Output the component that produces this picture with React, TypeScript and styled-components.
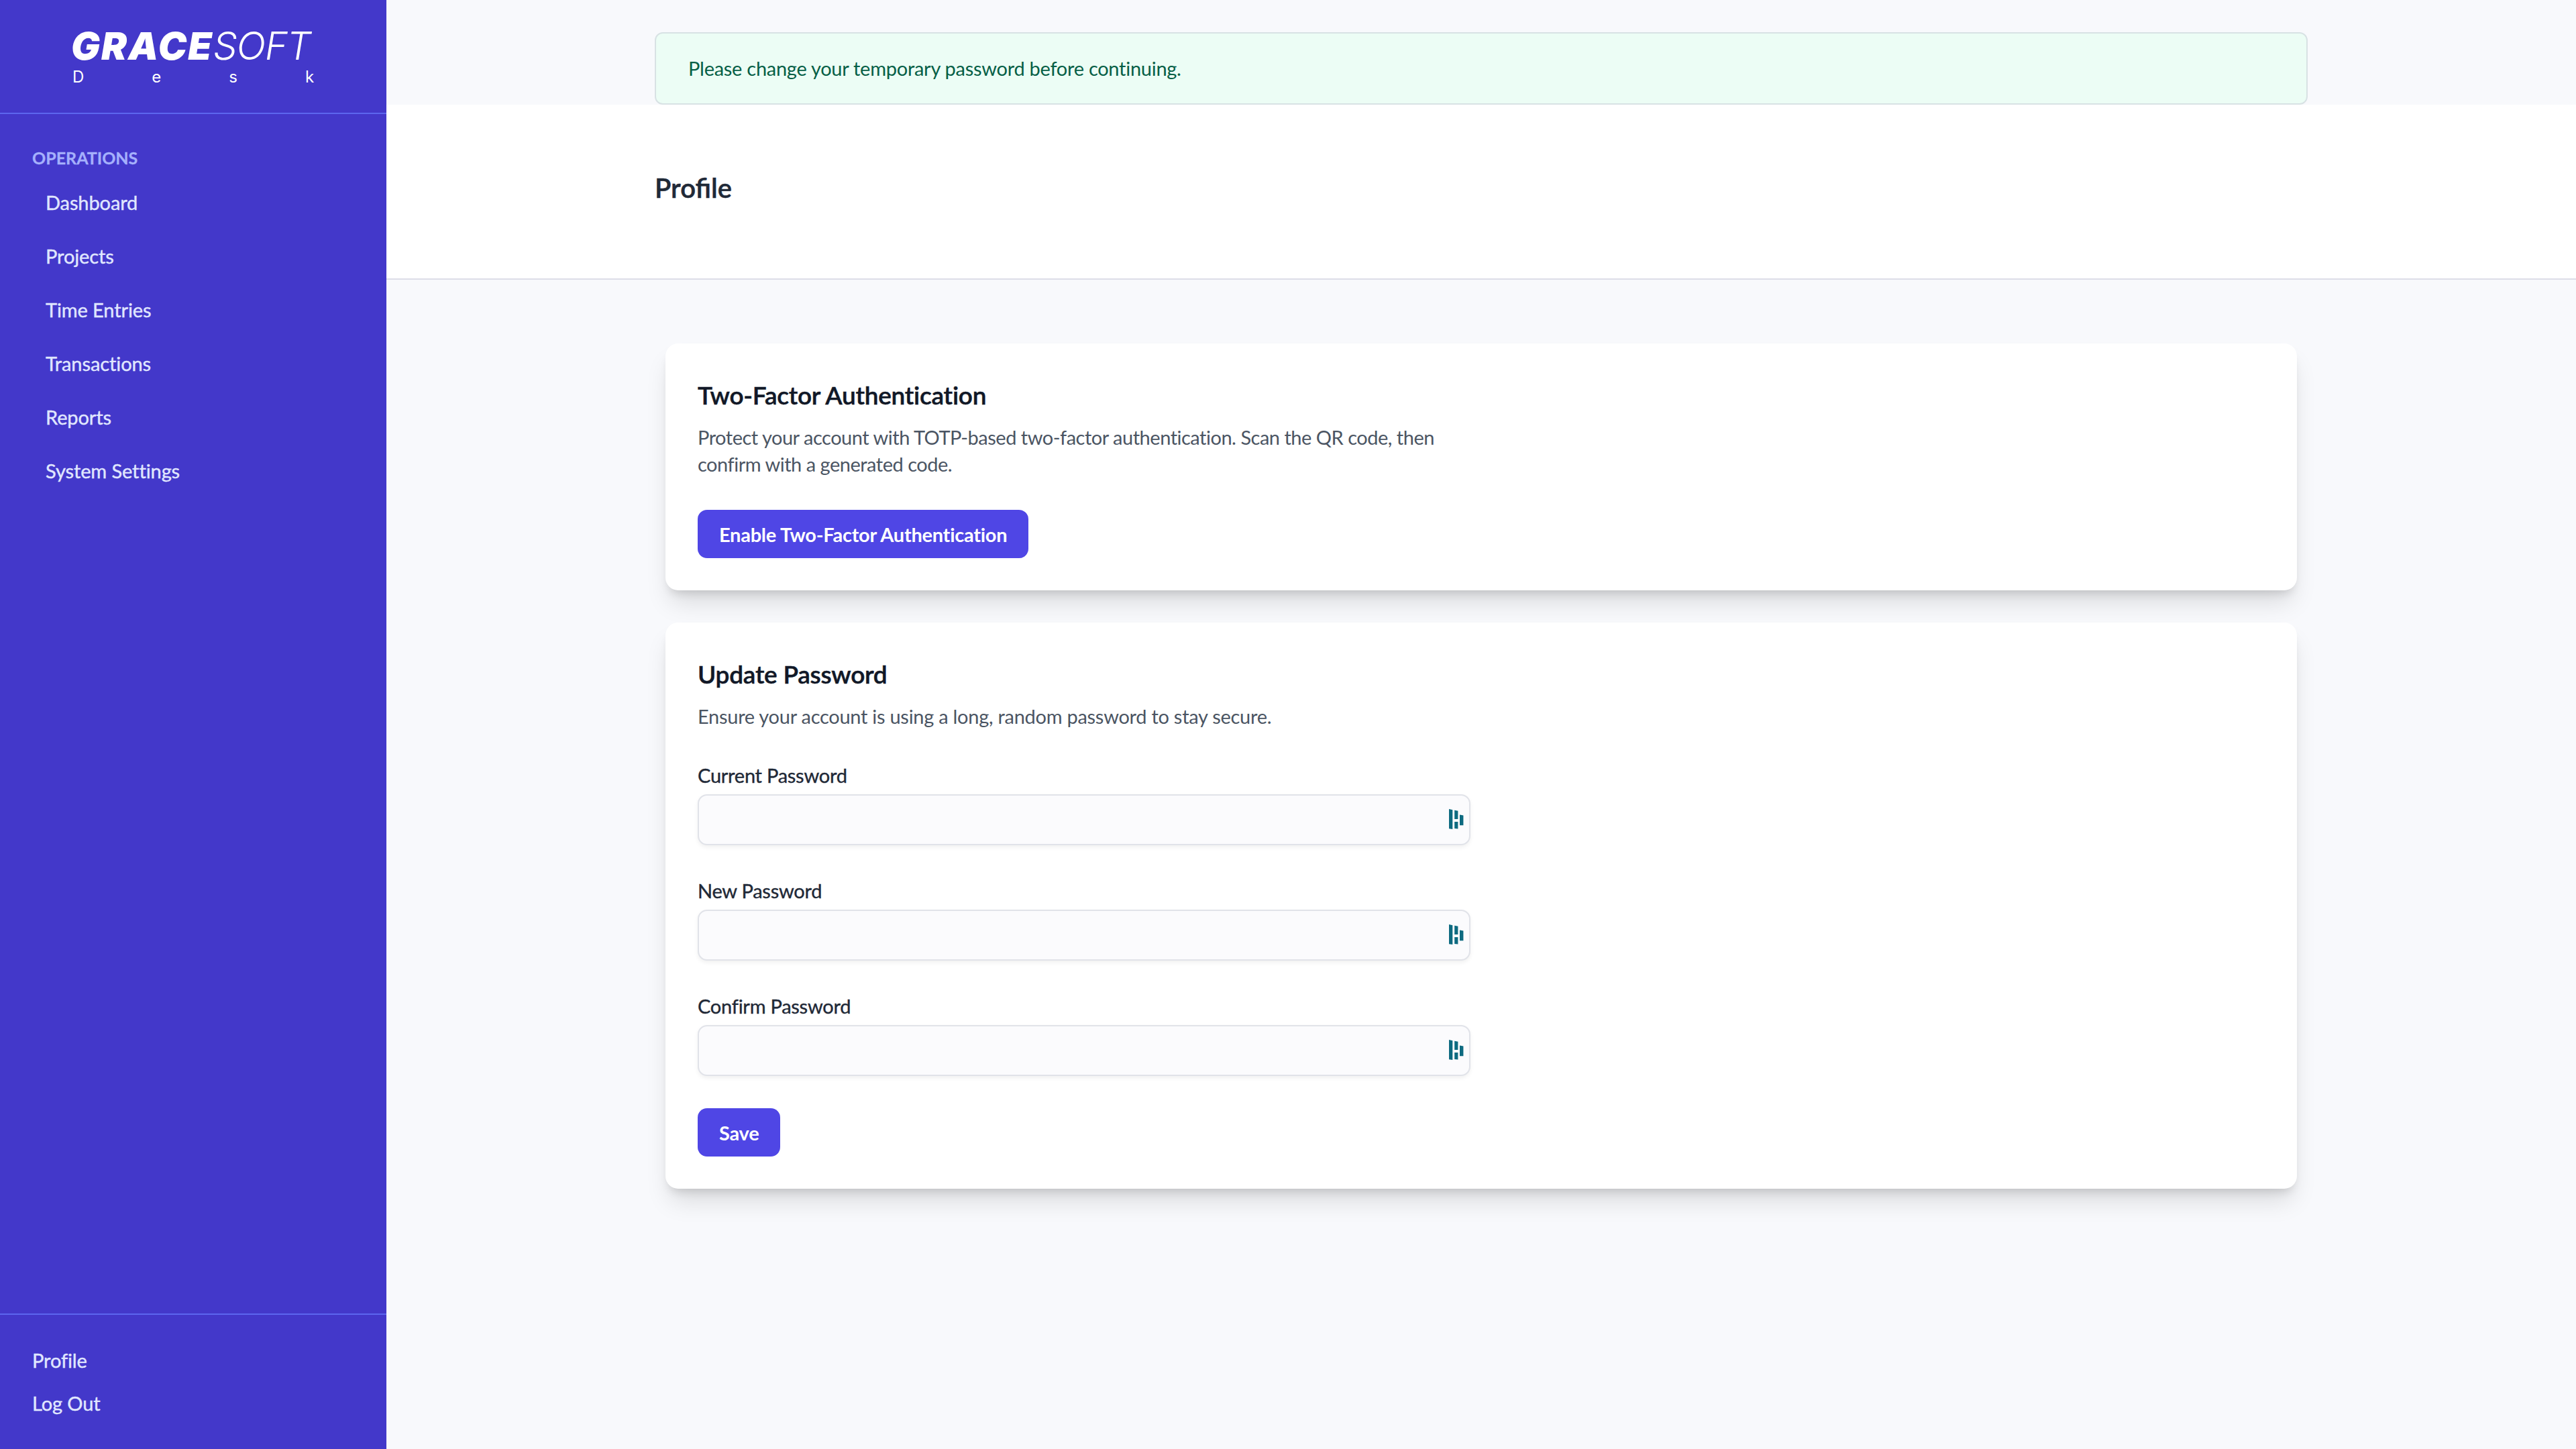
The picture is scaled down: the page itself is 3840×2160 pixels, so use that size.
import React from "react";
import styled, { createGlobalStyle } from "styled-components";

const UI = `Lato, "Noto Sans", sans-serif`;

const Global = createGlobalStyle`
  html, body { margin: 0; padding: 0; background: #f8f9fc; }
  * { box-sizing: border-box; }
  body { font-family: ${UI}; }
`;

const Shell = styled.div`
  display: flex;
  width: 3840px;
  height: 2160px;
  overflow: hidden;
`;

const Sidebar = styled.aside`
  width: 576px;
  flex: none;
  height: 100%;
  background: #4338ca;
  display: flex;
  flex-direction: column;
`;

const LogoBlock = styled.div`
  height: 170px;
  flex: none;
  border-bottom: 2px solid #5c66ee;
  padding: 36px 0 0 106px;
  font-family: Inter, sans-serif;
  color: #fff;
`;

const LogoMark = styled.div`
  font-size: 57px;
  line-height: 66px;
  font-style: italic;
  letter-spacing: -1px;
  font-weight: 300;
  white-space: nowrap;
  b { font-weight: 900; letter-spacing: 2px; }
`;

const LogoSub = styled.div`
  font-size: 24px;
  line-height: 28px;
  letter-spacing: 101px;
  white-space: nowrap;
  margin-top: -1px;
  padding-left: 2px;
`;

const NavSection = styled.nav`
  flex: 1;
  padding: 47px 0 0 48px;
  display: flex;
  flex-direction: column;
`;

const NavHeading = styled.div`
  font-size: 25px;
  line-height: 36px;
  font-weight: 700;
  color: #a5b0fc;
  -webkit-text-stroke: 0.3px #a5b0fc;
  margin-bottom: 9px;
`;

const NavItem = styled.a`
  display: block;
  height: 80px;
  line-height: 80px;
  padding-left: 20px;
  font-size: 29px;
  letter-spacing: -0.1px;
  -webkit-text-stroke: 0.4px #e0e7ff;
  color: #e0e7ff;
`;

const SideFoot = styled.div`
  flex: none;
  height: 202px;
  border-top: 2px solid #5c66ee;
  padding: 36px 0 0 48px;
`;

const FootItem = styled.a`
  display: block;
  height: 64px;
  line-height: 64px;
  font-size: 29px;
  letter-spacing: -0.1px;
  -webkit-text-stroke: 0.4px #e0e7ff;
  color: #e0e7ff;
`;

const Main = styled.main`
  flex: 1;
  min-width: 0;
  display: flex;
  flex-direction: column;
`;

const Banner = styled.div`
  width: 2464px;
  margin: 48px auto 0;
  height: 108px;
  display: flex;
  align-items: center;
  padding: 0 48px 2px;
  background: #ecfdf5;
  border: 2px solid #d8e2e4;
  border-radius: 12px;
  color: #065f46;
  font-size: 29px;
  letter-spacing: -0.27px;
`;

const PageHeader = styled.header`
  background: #fff;
  height: 261px;
  border-bottom: 2px solid #dcdde8;
  padding-top: 90px;
`;

const PageTitle = styled.h1`
  width: 2464px;
  margin: 0 auto;
  font-size: 40px;
  line-height: 68px;
  font-weight: 600;
  -webkit-text-stroke: 0.5px #1f2937;
  color: #1f2937;
`;

const Content = styled.div`
  width: 2432px;
  margin: 95px auto 0;
  display: flex;
  flex-direction: column;
  gap: 48px;
`;

const Card = styled.section`
  background: #fff;
  border-radius: 19px;
  padding: 48px;
  box-shadow: 0 24px 36px -7px rgba(0, 0, 0, 0.13), 0 10px 14px -6px rgba(0, 0, 0, 0.13);
`;

const CardTitle = styled.h2`
  margin: 0;
  font-size: 37px;
  line-height: 58px;
  letter-spacing: -0.25px;
  font-weight: 600;
  -webkit-text-stroke: 0.5px #111827;
  color: #111827;
`;

const CardText = styled.p<{ $tracking: number }>`
  margin: 14px 0 0;
  max-width: 1152px;
  font-size: 29px;
  line-height: 40px;
  letter-spacing: ${(p) => p.$tracking}px;
  color: #4b5563;
`;

const PrimaryButton = styled.button`
  display: block;
  height: 72px;
  padding: 0 32px;
  margin-top: 48px;
  border: 0;
  border-radius: 14px;
  background: #4f46e5;
  color: #fff;
  font-family: ${UI};
  font-size: 29px;
  letter-spacing: -0.26px;
  font-weight: 700;
`;

const FieldGroup = styled.div`
  margin-top: 48px;
  display: flex;
  flex-direction: column;
  gap: 48px;
`;

const Field = styled.label`
  display: block;
  width: 1152px;
`;

const FieldLabel = styled.span`
  display: block;
  font-size: 29px;
  line-height: 40px;
  letter-spacing: -0.25px;
  -webkit-text-stroke: 0.4px #1f2937;
  color: #1f2937;
  margin-bottom: 8px;
`;

const InputWrap = styled.span`
  display: block;
  position: relative;
`;

const PasswordInput = styled.input`
  display: block;
  width: 100%;
  height: 76px;
  border: 2px solid #e1e3e9;
  border-radius: 14px;
  background: #fbfbfd;
  box-shadow: 0 3px 6px rgba(0, 0, 0, 0.06);
  outline: none;
`;

const VaultIcon = styled.svg`
  position: absolute;
  right: 10px;
  top: 22px;
  width: 22px;
  height: 30px;
`;

function FillIcon() {
  return (
    <VaultIcon viewBox="0 0 22 30" aria-hidden="true">
      <path fill="#0d6a80" d="M0 0l5.3 1.2v28.8L0 29.2zM8.2 1.7l5.2 1.1V15H8.2zM8.2 19h5.2v10.6l-5.2-.7zM16 8.4l5.4 1.1v14.8H16z" />
    </VaultIcon>
  );
}

const nav = ["Dashboard", "Projects", "Time Entries", "Transactions", "Reports", "System Settings"];
const fields = ["Current Password", "New Password", "Confirm Password"];

export default function App() {
  return (
    <>
      <Global />
      <Shell>
        <Sidebar>
          <LogoBlock>
            <LogoMark><b>GRACE</b>SOFT</LogoMark>
            <LogoSub>Desk</LogoSub>
          </LogoBlock>
          <NavSection>
            <NavHeading>OPERATIONS</NavHeading>
            {nav.map((n) => <NavItem key={n}>{n}</NavItem>)}
          </NavSection>
          <SideFoot>
            <FootItem>Profile</FootItem>
            <FootItem>Log Out</FootItem>
          </SideFoot>
        </Sidebar>
        <Main>
          <Banner>Please change your temporary password before continuing.</Banner>
          <PageHeader>
            <PageTitle>Profile</PageTitle>
          </PageHeader>
          <Content>
            <Card>
              <CardTitle>Two-Factor Authentication</CardTitle>
              <CardText $tracking={-0.49}>
                Protect your account with TOTP-based two-factor authentication. Scan the QR code, then confirm with a generated code.
              </CardText>
              <PrimaryButton>Enable Two-Factor Authentication</PrimaryButton>
            </Card>
            <Card>
              <CardTitle>Update Password</CardTitle>
              <CardText $tracking={-0.27}>Ensure your account is using a long, random password to stay secure.</CardText>
              <FieldGroup>
                {fields.map((f) => (
                  <Field key={f}>
                    <FieldLabel>{f}</FieldLabel>
                    <InputWrap>
                      <PasswordInput type="password" />
                      <FillIcon />
                    </InputWrap>
                  </Field>
                ))}
              </FieldGroup>
              <PrimaryButton>Save</PrimaryButton>
            </Card>
          </Content>
        </Main>
      </Shell>
    </>
  );
}
